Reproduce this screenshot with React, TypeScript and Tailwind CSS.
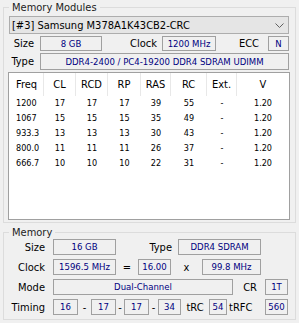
import React from "react"

const rows: string[][] = [
  ["1200", "17", "17", "17", "39", "55", "-", "1.20"],
  ["1067", "15", "15", "15", "35", "49", "-", "1.20"],
  ["933.3", "13", "13", "13", "30", "43", "-", "1.20"],
  ["800.0", "11", "11", "11", "26", "37", "-", "1.20"],
  ["666.7", "10", "10", "10", "22", "31", "-", "1.20"],
]

const headers = ["Freq", "CL", "RCD", "RP", "RAS", "RC", "Ext.", "V"]
const colW = ["w-[35px]", "w-[32px]", "w-[32px]", "w-[33px]", "w-[30px]", "w-[36px]", "w-[30px]", "w-[52px]"]

const Box: React.FC<{ className: string; children: React.ReactNode }> = ({ className, children }) => (
  <div className={`${className} border border-[#a0a0a0] flex items-center justify-center text-[9.5px] text-[#000080] whitespace-nowrap`}>
    {children}
  </div>
)

const Label: React.FC<{ className: string; children: React.ReactNode }> = ({ className, children }) => (
  <div className={`${className} whitespace-nowrap`}>{children}</div>
)

export default function App() {
  return (
    <div className="w-[299px] h-[323px] bg-[#f0f0f0] pt-[1px] overflow-hidden text-[11px] leading-none text-black font-['DejaVu_Sans_Condensed','DejaVu_Sans',sans-serif]">
      {/* Memory Modules */}
      <fieldset className="ml-[3px] w-[293px] h-[222px] border border-[#dcdcdc] px-[5px]">
        <legend className="px-[3px] leading-[13px] text-[#222]">Memory Modules</legend>
        <div className="mt-[2px] w-[280px] h-[18px] border border-[#adadad] bg-[#e5e5e5] flex items-center justify-between pl-[2px] pr-[4px]">
          <span>[#3] Samsung M378A1K43CB2-CRC</span>
          <svg width="9" height="5" viewBox="0 0 9 5">
            <polyline points="0.5,0.5 4.5,4.5 8.5,0.5" fill="none" stroke="#606060" strokeWidth="1" />
          </svg>
        </div>
        <div className="mt-[2px] flex items-center h-[15px]">
          <Label className="w-[31px] text-right pr-[6px]">Size</Label>
          <Box className="w-[62px] h-[15px]">8 GB</Box>
          <Label className="w-[60px] text-right pr-[5px]">Clock</Label>
          <Box className="w-[54px] h-[15px]">1200 MHz</Box>
          <Label className="w-[52px] text-right pr-[9px]">ECC</Label>
          <Box className="w-[21px] h-[15px]">N</Box>
        </div>
        <div className="mt-[2px] flex items-center h-[17px]">
          <Label className="w-[31px] text-right pr-[6px]">Type</Label>
          <Box className="w-[249px] h-[17px]">DDR4-2400 / PC4-19200 DDR4 SDRAM UDIMM</Box>
        </div>
        <div className="mt-[2px] ml-[-1px] w-[282px] h-[148px] bg-white border border-[#a0a0a0]">
          <div className="flex h-[23px]">
            {headers.map((h, i) => (
              <div
                key={h}
                className={`${colW[i]} flex items-center ${i === 0 ? "pl-[7px]" : "justify-center"} ${i < headers.length - 1 ? "border-r border-[#e8e8e8]" : ""}`}
              >
                {h}
              </div>
            ))}
          </div>
          {rows.map((r) => (
            <div key={r[0]} className="flex h-[15px] text-[9px]">
              {r.map((v, i) => (
                <div key={i} className={`${colW[i]} flex items-center ${i === 0 ? "pl-[7px]" : "justify-center"}`}>
                  {v}
                </div>
              ))}
            </div>
          ))}
        </div>
      </fieldset>

      {/* Memory */}
      <fieldset className="mt-[3px] ml-[3px] w-[293px] h-[94px] border border-[#dcdcdc] px-[5px]">
        <legend className="px-[3px] leading-[13px] text-[#222]">Memory</legend>
        <div className="flex flex-col gap-[4px]">
          <div className="flex items-center h-[16px]">
            <Label className="w-[44px] text-right pr-[8px]">Size</Label>
            <Box className="w-[63px] h-[16px]">16 GB</Box>
            <Label className="w-[62px] text-right pr-[6px]">Type</Label>
            <Box className="w-[83px] h-[16px]">DDR4 SDRAM</Box>
          </div>
          <div className="flex items-center h-[16px]">
            <Label className="w-[44px] text-right pr-[8px]">Clock</Label>
            <Box className="w-[63px] h-[16px]">1596.5 MHz</Box>
            <Label className="w-[22px] text-center">=</Label>
            <Box className="w-[33px] h-[16px]">16.00</Box>
            <Label className="w-[31px] text-center">x</Label>
            <Box className="w-[59px] h-[16px]">99.8 MHz</Box>
          </div>
          <div className="flex items-center h-[16px]">
            <Label className="w-[44px] text-right pr-[8px]">Mode</Label>
            <Box className="w-[180px] h-[16px]">Dual-Channel</Box>
            <Label className="w-[32px] text-right pr-[8px]">CR</Label>
            <Box className="w-[23px] h-[16px]">1T</Box>
          </div>
          <div className="flex items-center h-[16px]">
            <Label className="w-[44px] text-right pr-[8px]">Timing</Label>
            <Box className="w-[25px] h-[16px]">16</Box>
            <Label className="w-[13px] text-center">-</Label>
            <Box className="w-[25px] h-[16px]">17</Box>
            <Label className="w-[8px] text-center">-</Label>
            <Box className="w-[25px] h-[16px]">17</Box>
            <Label className="w-[9px] text-center">-</Label>
            <Box className="w-[23px] h-[16px]">34</Box>
            <Label className="w-[28px] text-center">tRC</Label>
            <Box className="w-[18px] h-[16px]">54</Box>
            <Label className="w-[38px] pl-[2px]">tRFC</Label>
            <Box className="w-[23px] h-[16px]">560</Box>
          </div>
        </div>
      </fieldset>
    </div>
  )
}
